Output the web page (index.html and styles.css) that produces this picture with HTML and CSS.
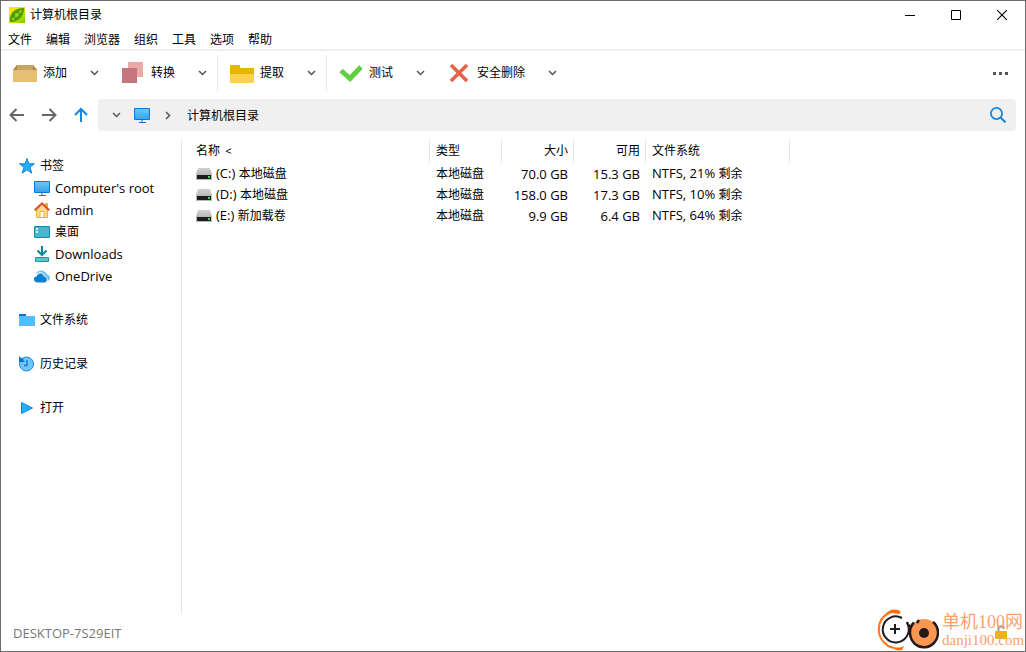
FILE: index.html
```html
<!DOCTYPE html>
<html lang="zh-CN">
<head>
<meta charset="utf-8">
<title>计算机根目录</title>
<link rel="stylesheet" href="styles.css">
</head>
<body>
<svg class="defs" aria-hidden="true">
  <defs>
    <linearGradient id="screen" x1="0" y1="0" x2="0" y2="1"><stop offset="0" stop-color="#6cc8fa"/><stop offset="1" stop-color="#35a4e4"/></linearGradient>
    <linearGradient id="app-bg" x1="0" y1="0" x2="1" y2="1"><stop offset="0" stop-color="#ffe600"/><stop offset="0.45" stop-color="#e4e800"/><stop offset="1" stop-color="#6fd000"/></linearGradient>
    <linearGradient id="drive-top" x1="0" y1="0" x2="0" y2="1"><stop offset="0" stop-color="#d2d2d2"/><stop offset="1" stop-color="#bcbcbc"/></linearGradient>
    <symbol id="chevron" viewBox="0 0 9 6"><path d="M1 1l3.5 3.5L8 1" fill="none" stroke="#555" stroke-width="1.5"/></symbol>
    <symbol id="monitor" viewBox="0 0 16 16"><path d="M.5 1.5h15v11H.5z" fill="url(#screen)" stroke="#0a78d0"/><path d="M8 13v2M5 15.500h7" stroke="#0a78d0" fill="none"/></symbol>
    <symbol id="drive" viewBox="0 0 16 12"><path d="M2 0h12l2 6H0z" fill="url(#drive-top)"/><path d="M0 6h16v6H0z" fill="#b8b8b8"/><path d="M1 7h14v4H1z" fill="#1c1c1c"/><path d="M12 8h2v2h-2z" fill="#2fe03c"/></symbol>
  </defs>
</svg>
<div class="window">
  <header class="titlebar">
    <svg class="app-icon" viewBox="0 0 16 16"><path d="M0 0h16v16H0z" fill="url(#app-bg)"/><path d="M1 15C0 7 5 1 15 1c0 8-5 14-14 14z" fill="#4f9a06"/><path d="M3.500 12.500l9-9" stroke="#8fdc1b" stroke-width="1"/><g fill="#8fdc1b"><circle cx="11.5" cy="4.5" r="1.300"/><circle cx="7.8" cy="8" r="1.900"/><circle cx="4" cy="12" r="1.300"/></g></svg>
    <h1 class="title">计算机根目录</h1>
    <div class="window-buttons">
      <button class="window-button" aria-label="最小化"><svg width="10" height="10" viewBox="0 0 10 10"><path d="M0 5.5h10" stroke="#000"/></svg></button>
      <button class="window-button" aria-label="最大化"><svg width="10" height="10" viewBox="0 0 10 10"><path d="M.5.5h9v9h-9z" fill="none" stroke="#000"/></svg></button>
      <button class="window-button" aria-label="关闭"><svg width="10" height="10" viewBox="0 0 10 10"><path d="M0 0l10 10M10 0L0 10" stroke="#000" stroke-width="1.1"/></svg></button>
    </div>
  </header>
  <nav class="menubar">
    <button class="menu-item">文件</button><button class="menu-item">编辑</button><button class="menu-item">浏览器</button><button class="menu-item">组织</button><button class="menu-item">工具</button><button class="menu-item">选项</button><button class="menu-item">帮助</button>
  </nav>
  <div class="toolbar">
    <div class="tool-group">
      <button class="tool"><svg class="tool-icon" viewBox="0 0 24 24"><path d="M4 4h16l4 5H0z" fill="#c8a562"/><path d="M0 9l4-5v5zM24 9l-4-5v5z" fill="#ad8745"/><path d="M0 9h24v12H0z" fill="#e7bf74"/></svg>添加</button>
      <button class="drop" aria-label="添加选项"><svg class="chevron"><use href="#chevron"/></svg></button>
    </div>
    <div class="tool-group divided">
      <button class="tool"><svg class="tool-icon" viewBox="0 0 24 24"><path d="M7 1h15v15H7z" fill="#eda9a5"/><path d="M1 7h15v15H1z" fill="#c4767e"/></svg>转换</button>
      <button class="drop" aria-label="转换选项"><svg class="chevron"><use href="#chevron"/></svg></button>
    </div>
    <div class="tool-group divided">
      <button class="tool"><svg class="tool-icon" viewBox="0 0 24 24"><path d="M0 4h10v3h14v6H0z" fill="#e8b600"/><path d="M0 13h24v9H0z" fill="#ffd04f"/></svg>提取</button>
      <button class="drop" aria-label="提取选项"><svg class="chevron"><use href="#chevron"/></svg></button>
    </div>
    <div class="tool-group">
      <button class="tool"><svg class="tool-icon" viewBox="0 0 24 24"><path d="M2 9.500l9 8L22 6" fill="none" stroke="#5fd03f" stroke-width="5"/></svg>测试</button>
      <button class="drop" aria-label="测试选项"><svg class="chevron"><use href="#chevron"/></svg></button>
    </div>
    <div class="tool-group">
      <button class="tool"><svg class="tool-icon" viewBox="0 0 24 24"><path d="M4 4l16 16M20 4L4 20" fill="none" stroke="#e8624b" stroke-width="3.600"/></svg>安全删除</button>
      <button class="drop" aria-label="安全删除选项"><svg class="chevron"><use href="#chevron"/></svg></button>
    </div>
    <button class="more" aria-label="更多"><svg width="15" height="3" viewBox="0 0 15 3"><path d="M0 0h3v3H0zM6 0h3v3H6zM12 0h3v3h-3z" fill="#555"/></svg></button>
  </div>
  <div class="navigation">
    <div class="nav-buttons">
      <button class="nav-button" aria-label="后退"><svg width="16" height="14" viewBox="0 0 16 14"><path d="M15 7H2M7.500 1L1.500 7l6 6" fill="none" stroke="#666" stroke-width="2"/></svg></button>
      <button class="nav-button" aria-label="前进"><svg width="16" height="14" viewBox="0 0 16 14"><path d="M1 7h13M8.500 1l6 6-6 6" fill="none" stroke="#666" stroke-width="2"/></svg></button>
      <button class="nav-button" aria-label="向上"><svg width="14" height="16" viewBox="0 0 14 16"><path d="M7 15V2M1 8l6-6 6 6" fill="none" stroke="#1687e0" stroke-width="2"/></svg></button>
    </div>
    <div class="address">
      <button class="crumb-drop" aria-label="历史地址"><svg class="chevron"><use href="#chevron"/></svg></button>
      <svg class="icon"><use href="#monitor"/></svg>
      <svg class="crumb-arrow" viewBox="0 0 6 9"><path d="M1 1l3.500 3.500L1 8" fill="none" stroke="#555" stroke-width="1.500"/></svg>
      <button class="crumb">计算机根目录</button>
      <button class="search" aria-label="搜索"><svg width="16" height="16" viewBox="0 0 16 16"><circle cx="6.500" cy="6.500" r="5.600" fill="none" stroke="#1687e0" stroke-width="1.800"/><path d="M10.500 10.500l5 5" stroke="#1687e0" stroke-width="2"/></svg></button>
    </div>
  </div>
  <main class="content">
    <nav class="sidebar">
      <a class="side-item" href="#bookmarks"><svg class="icon" viewBox="0 0 16 16"><path d="M8 .5l1.900 5.300h5.600L11 9.200l1.800 6L8 11.800l-4.800 3.400 1.800-6L.5 5.800h5.600z" fill="#22b0fa" stroke="#1481d8"/></svg>书签</a>
      <a class="side-item nested latin" href="#root"><svg class="icon"><use href="#monitor"/></svg>Computer's root</a>
      <a class="side-item nested latin" href="#admin"><svg class="icon" viewBox="0 0 16 16"><path d="M11 1h3v6h-3z" fill="#f0b030"/><path d="M2.500 8L8 2.500 13.500 8v7.500h-11z" fill="#ffd991" stroke="#f0b030"/><path d="M6 15.500v-6h4v6z" fill="#fff" stroke="#f0b030"/><path d="M.7 8.300L8 1.300l7.300 7" fill="none" stroke="#dc4b30" stroke-width="1.900"/></svg>admin</a>
      <a class="side-item nested" href="#desktop"><svg class="icon" viewBox="0 0 16 16"><path d="M.5 2.500h15v11H.5z" fill="#49b4cc" stroke="#168eb4"/><path d="M2 4h2v2H2zM2 7h2v2H2z" fill="#d4f4fa"/></svg>桌面</a>
      <a class="side-item nested latin" href="#downloads"><svg class="icon" viewBox="0 0 16 16"><path d="M8 0v8M3.500 4.500L8 9l4.500-4.500" fill="none" stroke="#078799" stroke-width="2"/><path d="M1.500 11.500h13v4h-13z" fill="#50c9c2" stroke="#159ca5"/></svg>Downloads</a>
      <a class="side-item nested latin" href="#onedrive"><svg class="icon" viewBox="0 0 16 16"><path d="M2 5.500C4 1.500 11 1 13 6.500c4 1 4 6 0 6.500L9 9z" fill="#6fc3f2"/><path d="M2.500 6.300C6 3 10 5 10.500 8.300c2 .4 3 2.200 2.500 4.700" fill="none" stroke="#fff"/><path d="M3 14.500c-4-.5-4-6-.5-6C4 4.500 9 5 9.500 8.500c4 0 4 5.500 1.500 6z" fill="#0d80cd"/></svg>OneDrive</a>
      <a class="side-item section" href="#filesystem"><svg class="icon" viewBox="0 0 16 16"><path d="M0 2h7v3H0z" fill="#0872cf"/><path d="M0 4h16v10H0z" fill="#50bdff"/></svg>文件系统</a>
      <a class="side-item section" href="#history"><svg class="icon" viewBox="0 0 16 16"><circle cx="7.500" cy="8" r="7" fill="#6cc5fb" stroke="#2086d9"/><path d="M8 4v5.500H5" fill="none" stroke="#1576ca" stroke-width="1.300"/><path d="M0 0l2 2 3 1-1 1 2 2H0z" fill="#0a72cd"/></svg>历史记录</a>
      <a class="side-item section" href="#open"><svg class="icon" viewBox="0 0 16 16"><path d="M2.500 2.500v11L13.500 8z" fill="#27acfa" stroke="#1688dc"/></svg>打开</a>
    </nav>
    <section class="files">
      <table class="file-table">
        <colgroup><col class="col-name"><col class="col-small"><col class="col-small"><col class="col-small"><col class="col-system"></colgroup>
        <thead><tr><th>名称 <span class="sort">&lt;</span></th><th>类型</th><th class="number">大小</th><th class="number">可用</th><th>文件系统</th></tr></thead>
        <tbody>
          <tr><td><span class="file-name"><svg class="drive"><use href="#drive"/></svg><span class="latin">(C:) <span class="han">本地磁盘</span></span></span></td><td>本地磁盘</td><td class="number latin">70.0 GB</td><td class="number latin">15.3 GB</td><td class="latin">NTFS, 21% <span class="han">剩余</span></td></tr>
          <tr><td><span class="file-name"><svg class="drive"><use href="#drive"/></svg><span class="latin">(D:) <span class="han">本地磁盘</span></span></span></td><td>本地磁盘</td><td class="number latin">158.0 GB</td><td class="number latin">17.3 GB</td><td class="latin">NTFS, 10% <span class="han">剩余</span></td></tr>
          <tr><td><span class="file-name"><svg class="drive"><use href="#drive"/></svg><span class="latin">(E:) <span class="han">新加载卷</span></span></span></td><td>本地磁盘</td><td class="number latin">9.9 GB</td><td class="number latin">6.4 GB</td><td class="latin">NTFS, 64% <span class="han">剩余</span></td></tr>
        </tbody>
      </table>
    </section>
  </main>
  <footer class="statusbar">
    <span class="latin">DESKTOP-7S29EIT</span>
    <svg class="lock" viewBox="0 0 12 15"><path d="M3.500 7V1.500h5V4" fill="none" stroke="#9b9b9b" stroke-width="2"/><rect y="6" width="12" height="8" rx="1" fill="#e8b60c"/></svg>
  </footer>
  <div class="watermark">
    <svg class="watermark-logo" viewBox="0 0 62 42"><path d="M12 4C4 8 1 15 2 23c1 8 7 14 14 16" fill="none" stroke="#ff7417" stroke-width="2"/><path d="M8 6c4-6 12-7 16-3l-2 2c-5-1-9-1-14 1zM14 37c5 2 9 2 13 0l-2 4c-5 1-8 0-11-4z" fill="#ff6d08"/><path d="M25 9A13 13 0 1 0 31 16" fill="none" stroke="#231a1c" stroke-width="2"/><path d="M18 15v10M13 20h10" stroke="#231a1c" stroke-width="2"/><circle cx="47" cy="24" r="14" fill="#ff9652"/><path d="M37 13.500c-6 6-5 16 1 21.500 6 5 14 4 19-1 6-7 5-16-1-21" fill="none" stroke="#231a1c" stroke-width="2.500"/><circle cx="47" cy="24" r="5" fill="#231a1c"/><path d="M30 13c1 4 3 5 5 4M40 14l2-3" fill="none" stroke="#231a1c" stroke-width="2.500"/></svg>
    <div class="watermark-text"><span class="watermark-name">单机100网</span><span class="watermark-site">danji100.com</span></div>
  </div>
</div>
</body>
</html>
```
FILE: styles.css
```css
* { box-sizing: border-box; }

body {
  margin: 0;
  background: #fff;
  color: #000;
  font: 12px/20px "Noto Sans", "Noto Sans CJK SC", sans-serif;
}

button {
  display: flex;
  align-items: center;
  justify-content: center;
  padding: 0;
  border: 0;
  background: none;
  color: inherit;
  font: inherit;
}

svg { display: block; flex: none; }
.defs { position: absolute; width: 0; height: 0; }
.latin { font-family: "Open Sans", "Noto Sans CJK SC", sans-serif; font-size: 13px; }
.han { font-size: 12px; }

.window {
  position: relative;
  display: flex;
  flex-direction: column;
  min-height: 100vh;
  border: 1px solid #6c6c6c;
}

.titlebar { display: flex; align-items: center; height: 28px; padding-left: 8px; }
.app-icon { width: 16px; height: 16px; }
.title { margin: 0 0 0 5px; font-size: 12px; font-weight: 400; }
.window-buttons { display: flex; margin-left: auto; }
.window-button { width: 46px; height: 28px; }

.menubar {
  display: flex;
  gap: 14px;
  height: 22px;
  padding: 1px 0 0 7px;
  border-bottom: 2px solid #efefef;
}
.menu-item { height: 20px; }

.toolbar { display: flex; align-items: center; height: 44px; }
.tool-group { display: flex; align-items: center; height: 36px; padding: 0 3px 0 12px; }
.divided { box-sizing: content-box; border-right: 1px solid #e6e6e6; }
.tool { gap: 6px; height: 36px; }
.tool-icon { width: 24px; height: 24px; }
.drop { width: 24px; height: 36px; margin-left: 15px; }
.chevron { width: 9px; height: 6px; }
.more { width: 32px; height: 36px; margin: 0 9px 0 auto; }

.navigation { display: flex; height: 36px; padding: 4px 9px 0 0; }
.nav-buttons { display: flex; width: 97px; }
.nav-button { width: 32px; height: 32px; }
.address {
  display: flex;
  flex: 1;
  align-items: center;
  border-radius: 4px;
  background: #f0f0f0;
}
.crumb-drop { width: 36px; height: 32px; }
.icon { width: 16px; height: 16px; }
.crumb-arrow { width: 6px; height: 9px; margin: 0 16px 0 15px; }
.crumb { padding-top: 2px; }
.search { width: 36px; height: 32px; margin-left: auto; }

.content { display: flex; flex: 1; padding-top: 8px; }
.sidebar {
  display: flex;
  flex-direction: column;
  flex: none;
  width: 181px;
  padding: 16px 0 0 18px;
  border-right: 1px solid #e6e6e6;
}
.side-item {
  display: flex;
  align-items: center;
  gap: 5px;
  height: 22px;
  color: inherit;
  text-decoration: none;
}
.nested { padding-left: 15px; }
.section { margin-top: 22px; }

.files { flex: 1; padding-left: 8px; }
.file-table { width: 600px; border-collapse: separate; border-spacing: 0; table-layout: fixed; }
.col-name { width: 240px; }
.col-small { width: 72px; }
.col-system { width: 144px; }
.file-table th {
  height: 24px;
  padding: 0 5px 0 6px;
  border-right: 1px solid #e6e6e6;
  font-weight: 400;
  text-align: left;
}
.file-table td { height: 21px; padding: 0 6px; line-height: 20px; white-space: nowrap; }
.file-table .number { text-align: right; }
.file-name { display: flex; align-items: center; gap: 4px; }
.drive { width: 16px; height: 12px; }
.sort { margin-left: 2px; font-size: 11px; }

.statusbar {
  display: flex;
  align-items: center;
  justify-content: space-between;
  height: 37px;
  padding: 0 18px 0 12px;
  color: #777;
}
.lock { width: 12px; height: 15px; }

.watermark {
  position: absolute;
  right: 3px;
  bottom: 0;
  display: flex;
  align-items: center;
  gap: 3px;
  color: #ffa06b;
  pointer-events: none;
}
.watermark-logo { width: 62px; height: 42px; }
.watermark-text { display: flex; flex-direction: column; width: 80px; white-space: nowrap; }
.watermark-name { font: 18px/20px "Liberation Serif", "Noto Sans CJK SC", serif; }
.watermark-site { font: 15px/17px "Liberation Serif", serif; }
```
